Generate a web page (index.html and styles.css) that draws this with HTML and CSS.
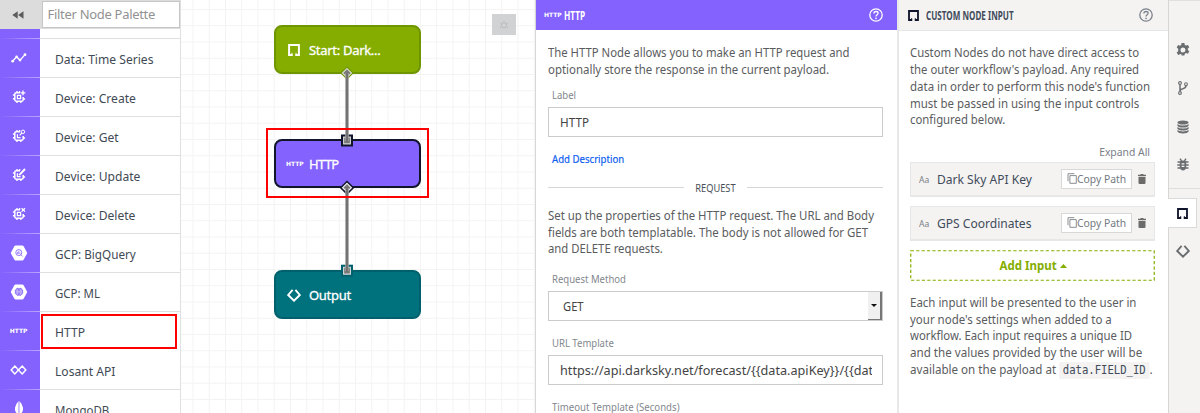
FILE: index.html
```html
<!DOCTYPE html>
<html lang="en">
<head>
<meta charset="utf-8">
<title>Workflow Editor</title>
<link rel="stylesheet" href="styles.css">
</head>
<body>
<svg width="0" height="0" class="defs">
  <symbol id="chip" viewBox="0 0 14 14"><path d="M8 2.8H4.2Q2.8 2.8 2.8 4.2V9.8Q2.8 11.2 4.2 11.2H9.8Q11.2 11.2 11.2 9.8V7" fill="none" stroke="#fff" stroke-width="1.5"/><path d="M5 0.9V2.8M7.6 1V2.8M5 11.2v1.9M8.8 11.2v1.9M.9 5H2.8M.9 8.8H2.8M11.2 9h1.9" stroke="#fff" stroke-width="1.4"/></symbol>
  <symbol id="bracket" viewBox="0 0 12 12"><path d="M4.500 10.9H1.1V1.1H10.9V10.9H7.500" fill="none" stroke="currentColor" stroke-width="2"/><path d="M4 8.800V12M8 8.800V12" stroke="currentColor" stroke-width="1"/></symbol>
  <symbol id="diamond" viewBox="0 0 14 14"><path d="M5.600 1.900L1.2 7L7 12.7L12.8 7L8.400 1.900" fill="none" stroke="currentColor" stroke-width="1.9"/></symbol>
  <symbol id="help" viewBox="0 0 14 14"><circle cx="7" cy="7" r="6.2" fill="none" stroke="currentColor" stroke-width="1.3"/><path d="M4.9 5.5C4.9 4.1 5.8 3.5 7 3.5S9.1 4.2 9.1 5.3C9.1 6.8 7 6.7 7 8.5" fill="none" stroke="currentColor" stroke-width="1.3"/><circle cx="7" cy="10.3" r=".85" fill="currentColor"/></symbol>
  <symbol id="trash" viewBox="0 0 8 10"><path d="M0 .8H2.3L2.8 0H5.2L5.7.8H8V2H0zM.5 2.7H7.5V9Q7.5 10 6.5 10H1.5Q.5 10 .5 9z" fill="#6b6b6b"/></symbol>
  <symbol id="copy" viewBox="0 0 10 11"><path d="M2.9 2.6H9.3V10.3H2.9zM1 8.2V.7H7.3" fill="none" stroke="#7d8186" stroke-width=".9"/></symbol>
  <symbol id="hexagon" viewBox="0 0 18 16"><path d="M5.6.5H12.4Q13.2.5 13.6 1.2L16.9 7.2Q17.3 8 16.9 8.8L13.6 14.8Q13.2 15.5 12.4 15.5H5.6Q4.8 15.5 4.4 14.8L1.1 8.8Q.7 8 1.1 7.2L4.4 1.2Q4.8.5 5.6.5z" fill="#fff"/></symbol>
</svg>
<div class="app">
  <aside class="palette">
    <div class="palette-head">
      <div class="collapse"><svg width="12" height="8" viewBox="0 0 12 8"><path d="M5.7.3V7.7L.3 4zM11.5.3V7.7L6.1 4z" fill="#5c5c5c"/></svg></div>
      <div class="filter"><span>Filter Node Palette</span></div>
    </div>
    <div class="palette-row stub"><div class="ico"></div><div class="name"></div></div>
    <div class="palette-row"><div class="ico"><svg width="16" height="10" viewBox="0 0 16 10"><path d="M1.6 8.2L5.6 3.8L9 7.2L14 1.6" fill="none" stroke="#fff" stroke-width="1.3"/><g fill="#fff"><circle cx="1.7" cy="8.2" r="1.4"/><circle cx="5.6" cy="3.9" r="1.3"/><circle cx="9" cy="7.1" r="1.3"/><circle cx="14" cy="1.7" r="1.4"/></g></svg></div><div class="name"><span class="n1">Data: Time Series</span></div></div>
    <div class="palette-row"><div class="ico"><svg width="14" height="14" viewBox="0 0 14 14"><use href="#chip"/><path d="M5.4 5.4h3.2v3.2H5.4zM11 .6V5.2M8.7 2.9h4.6" fill="none" stroke="#fff" stroke-width="1.3"/></svg></div><div class="name"><span class="n2">Device: Create</span></div></div>
    <div class="palette-row"><div class="ico"><svg width="14" height="14" viewBox="0 0 14 14"><use href="#chip"/><circle cx="11" cy="2.8" r="1.7" fill="none" stroke="#fff"/><path d="M9.8 4L7.6 6.3M5.4 5.2v3.4h3.2" fill="none" stroke="#fff" stroke-width="1.2"/></svg></div><div class="name"><span class="n3">Device: Get</span></div></div>
    <div class="palette-row"><div class="ico"><svg width="14" height="14" viewBox="0 0 14 14"><use href="#chip"/><path d="M7.2 7.2L13 1" stroke="#fff" stroke-width="1.9"/><path d="M5.4 5.2v3.4h3.2" fill="none" stroke="#fff" stroke-width="1.3"/></svg></div><div class="name"><span class="n4">Device: Update</span></div></div>
    <div class="palette-row"><div class="ico"><svg width="14" height="14" viewBox="0 0 14 14"><use href="#chip"/><path d="M5.4 5.4h3.2v3.2H5.4zM9.6 1.2L13 4.6M13 1.2L9.6 4.6" fill="none" stroke="#fff" stroke-width="1.3"/></svg></div><div class="name"><span class="n5">Device: Delete</span></div></div>
    <div class="palette-row"><div class="ico"><svg width="18" height="16" viewBox="0 0 18 16"><use href="#hexagon"/><circle cx="8.8" cy="7.6" r="3" fill="none" stroke="#8766fe" stroke-width=".9"/><path d="M7.6 7v2M8.8 5.8v3.4M10 7.5v1.4M11 9.8l1.7 1.7" stroke="#8766fe" stroke-width=".8"/></svg></div><div class="name"><span class="n6">GCP: BigQuery</span></div></div>
    <div class="palette-row"><div class="ico"><svg width="18" height="16" viewBox="0 0 18 16"><use href="#hexagon"/><path d="M8.6 4.4Q6.8 3.5 6.3 5.3Q4.6 5.8 5.3 7.8Q4.7 10 6.5 10.5Q7.3 12.2 8.6 11.3zM9.4 4.4Q11.2 3.5 11.7 5.3Q13.4 5.8 12.7 7.8Q13.3 10 11.5 10.5Q10.7 12.2 9.4 11.3z" fill="#9b82fe" stroke="#7959ee" stroke-width=".6"/><path d="M6 7.9h6M7.2 5.5v1.4M10.8 5.5v1.4M7.2 9v1.3M10.8 9v1.3" stroke="#fff" stroke-width=".6"/></svg></div><div class="name"><span class="n7">GCP: ML</span></div></div>
    <div class="palette-row"><div class="ico"><b class="http">HTTP</b></div><div class="name hot"><span class="n8">HTTP</span></div></div>
    <div class="palette-row"><div class="ico"><svg width="17" height="10" viewBox="0 0 17 10"><path d="M7.2 3.6L4.8 1.1L1.2 5L4.8 8.9L12.2 1.1L15.8 5L12.2 8.9L9.8 6.4" fill="none" stroke="#fff" stroke-width="1.5"/><path d="M7.2 3.6L9.8 6.4" stroke="#fff" stroke-width="1.5"/></svg></div><div class="name"><span class="n9">Losant API</span></div></div>
    <div class="palette-row"><div class="ico"><svg width="8" height="16" viewBox="0 0 8 16"><path d="M3.6 0Q-.1 4-.1 8Q0 11.5 3.6 14zM4.4 0Q8.1 4 8.1 8Q8 11.5 4.4 14z" fill="#fff"/></svg></div><div class="name"><span class="n10">MongoDB</span></div></div>
  </aside>

  <main class="canvas">
    <div class="bug"><svg width="10" height="10" viewBox="0 0 10 10"><circle cx="5" cy="5.3" r="2.6" fill="none" stroke="#b9bbbd"/><path d="M5 .8v2M1 3l1.6.9M9 3l-1.6.9M1 8l1.6-1M9 8L7.4 7" stroke="#b9bbbd" stroke-width=".8"/></svg></div>
    <div class="node start"><svg width="12" height="12"><use href="#bracket"/></svg><span>Start: Dark...</span></div>
    <div class="node http-node"><b class="http">HTTP</b><span>HTTP</span></div>
    <div class="node output"><svg width="14" height="14"><use href="#diamond"/></svg><span>Output</span></div>
    <svg class="wires" width="354" height="413" viewBox="181 0 354 413">
      <path d="M347 66.3L353.8 73L347 79.7L340.2 73z" fill="#6f9500"/><path d="M347 68.6L351.5 73L347 77.4L342.5 73z" fill="#777" stroke="#dce0cf" stroke-width="1.1"/>
      <path d="M341 134.5h12v12h-12z" fill="#10152b"/><path d="M343.6 137.1h6.8v6.8h-6.8z" fill="#777" stroke="#d8d8d8" stroke-width="1.1"/>
      <path d="M347 180.4L354.4 187.7L347 195L339.6 187.7z" fill="#10152b"/><path d="M347 183.4L351.4 187.7L347 192L342.6 187.7z" fill="#777" stroke="#eee" stroke-width="1.2"/>
      <path d="M341 264.7h12v12h-12z" fill="#00616d"/><path d="M343.6 267.3h6.8v6.8h-6.8z" fill="#777" stroke="#d8dcdc" stroke-width="1.1"/>
      <path d="M347 73V141M347 188V271" stroke="#a0a0a0" stroke-width="3.6"/><path d="M347 73V141M347 188V271" stroke="#737373" stroke-width="2"/>
    </svg>
    <div class="highlight"></div>
  </main>

  <section class="props">
    <header><b class="http">HTTP</b><strong class="title">HTTP</strong><svg width="14" height="14"><use href="#help"/></svg></header>
    <div class="form">
      <p><span class="a1">The HTTP Node allows you to make an HTTP request and</span><span class="a2">optionally store the response in the current payload.</span></p>
      <label class="first"><span class="l1">Label</span></label>
      <div class="field"><span class="f1">HTTP</span></div>
      <div class="add-desc"><span>Add Description</span></div>
      <div class="divider"><span>REQUEST</span></div>
      <p><span class="a3">Set up the properties of the HTTP request. The URL and Body</span><span class="a4">fields are both templatable. The body is not allowed for GET</span><span class="a5">and DELETE requests.</span></p>
      <label class="second"><span class="l2">Request Method</span></label>
      <div class="field select"><span class="f2">GET</span><i><svg width="6" height="3" viewBox="0 0 6 3"><path d="M0 0H6L3 3z" fill="#111"/></svg></i></div>
      <label class="third"><span class="l3">URL Template</span></label>
      <div class="field url"><div class="clip"><span class="f3">https://api.darksky.net/forecast/{{data.apiKey}}/{{data</span></div></div>
      <label class="third"><span class="l4">Timeout Template (Seconds)</span></label>
    </div>
  </section>

  <section class="inputs">
    <header><svg class="mark" width="11" height="11"><use href="#bracket"/></svg><strong class="title">CUSTOM NODE INPUT</strong><svg width="14" height="14" class="q"><use href="#help"/></svg></header>
    <div class="content">
      <p><span class="b1">Custom Nodes do not have direct access to</span><span class="b2">the outer workflow's payload. Any required</span><span class="b3">data in order to perform this node's function</span><span class="b4">must be passed in using the input controls</span><span class="b5">configured below.</span></p>
      <div class="expand"><span>Expand All</span></div>
      <div class="card"><small>Aa</small><span class="c1">Dark Sky API Key</span><div class="copy"><svg width="10" height="11"><use href="#copy"/></svg><span>Copy Path</span></div><svg width="8" height="10"><use href="#trash"/></svg></div>
      <div class="card"><small>Aa</small><span class="c2">GPS Coordinates</span><div class="copy"><svg width="10" height="11"><use href="#copy"/></svg><span>Copy Path</span></div><svg width="8" height="10"><use href="#trash"/></svg></div>
      <div class="add-input"><svg class="dash" width="245" height="31"><rect x=".75" y=".75" width="243.5" height="29.5"/></svg><span>Add Input</span><svg width="7" height="4" viewBox="0 0 7 4"><path d="M0 4L3.5 0L7 4z" fill="#84ad00"/></svg></div>
      <p class="last"><span class="b6">Each input will be presented to the user in</span><span class="b7">your node's settings when added to a</span><span class="b8">workflow. Each input requires a unique ID</span><span class="b9">and the values provided by the user will be</span><span class="b10">available on the payload at <code>data.FIELD_ID</code>.</span></p>
    </div>
  </section>

  <nav class="rail">
    <div class="tab"><svg width="14" height="14" viewBox="0 0 14 14"><path d="M5.6 0h2.8l.4 1.9 1.2.7 1.9-.7 1.4 2.4-1.5 1.3v1.4l1.5 1.3-1.4 2.4-1.9-.7-1.2.7-.4 1.9H5.600l-.4-1.9L4 11.300l-1.900.7L.7 9.600 2.200 8.300V5.700L.7 4.400 2.100 2l1.900.7 1.200-.7zM7 4.500a2.500 2.500 0 100 5 2.500 2.500 0 000-5z" fill="#6b6e70" fill-rule="evenodd"/></svg></div>
    <div class="tab"><svg width="10" height="14" viewBox="0 0 10 14"><g fill="none" stroke="#6b6e70" stroke-width="1.100"><circle cx="2" cy="2" r="1.400"/><circle cx="2" cy="12" r="1.400"/><circle cx="8" cy="3.200" r="1.400"/><path stroke-width="1.500" d="M2 3.400v7.200M8 4.600Q8 7.200 5 7.700Q2.200 8.200 2.100 10"/></g></svg></div>
    <div class="tab"><svg width="12" height="14" viewBox="0 0 12 14"><g fill="#6b6e70"><ellipse cx="6" cy="2.500" rx="5.600" ry="2.100"/><path d="M.4 4Q2 5.500 6 5.500T11.600 4V5.700Q10.500 7.600 6 7.600T.4 5.700zM.4 7.100Q2 8.600 6 8.600T11.600 7.100V8.700Q10.500 10.500 6 10.500T.4 8.700zM.4 10.100Q2 11.500 6 11.500T11.600 10.100V11.600Q10.500 13.500 6 13.500T.4 11.600z"/></g></svg></div>
    <div class="tab"><svg width="12" height="13" viewBox="0 0 12 13"><path d="M2.800 3.500Q6 1.300 9.200 3.500V9.500Q8.400 12.500 6 12.500T2.800 9.500z" fill="#6b6e70"/><path d="M.5 4H11.500M.3 7H11.700M.5 10H11.500M3 .7L4.600 3M9 .7L7.400 3" stroke="#6b6e70" stroke-width="1.400"/><path d="M4.600 5.800h2.800M4.600 8.400h2.800" stroke="#f4f3f2" stroke-width="1.200"/></svg></div>
    <div class="tab active"><svg width="11" height="11"><use href="#bracket"/></svg></div>
    <div class="tab out"><svg width="14" height="14"><use href="#diamond"/></svg></div>
  </nav>
</div>
</body>
</html>
```

FILE: styles.css
```css
* { box-sizing: border-box; }
body { margin: 0; background: #fff; font-family: "Noto Sans", "Open Sans", sans-serif; font-size: 12.6px; color: #5a5c5e; }
.defs { position: absolute; }
.app { display: grid; grid-template-columns: 181px 354px 362px 271px 32px; height: 413px; overflow: hidden; }
svg { flex: none; display: block; }
span, strong, b { white-space: nowrap; }
p { margin: 0; line-height: 16.8px; }
p > span { display: block; width: max-content; }
.http { font: 700 6px/8px "DejaVu Sans", sans-serif; color: #fff; }

/* Condensed text widths */
p > span, .name span, .field span, label span, .add-desc span, .divider span, .expand span, .card span, .add-input span, .title { transform: scaleX(var(--w, .9)); transform-origin: left; }
.a1 { --w: .899; }
.a2, .a4 { --w: .908; }
.a3 { --w: .905; }
.b3, .b4, .b6, .b7 { --w: .911; }
.b9, .b10 { --w: .921; }
.name { --w: .96; }
.n6 { --w: .93; }
.n7, .n10 { --w: .91; }
.l4 { --w: .907; }
.f2 { --w: .86; }
.f3 { --w: .973; }
.expand, .card { --w: .942; }
.add-input { --w: .92; }

/* Palette */
.palette { border-right: 1px solid #e0e0e0; overflow: hidden; }
.palette-head { display: flex; height: 29px; padding: 1px 0; background: #dcdcdc; }
.collapse { width: 41.500px; display: flex; align-items: center; padding-left: 12px; }
.filter { flex: 1; background: #fff; border: 1px solid #c6c6c6; display: flex; align-items: center; padding: 0 0 1px 5px; font-size: 13px; color: #929292; letter-spacing: -.3px; }
.palette-row { display: flex; height: 39px; }
.palette-row.stub { height: 9.500px; }
.ico { width: 40px; background: linear-gradient(90deg, #8462fe, #b9a6fb) bottom / 100% 1px no-repeat #8462fe; display: flex; align-items: center; justify-content: center; padding-right: 3px; }
.name { flex: 1; border-bottom: 1px solid #dfdfdf; padding: 4px 0 0 14.500px; display: flex; align-items: center; font-size: 12.600px; color: #414a54; }
.palette-row .hot { border: 2px solid #f00; margin: 2px 3px 2px 1px; padding: 2px 0 0 11.500px; }

/* Canvas */
.canvas { position: relative; background-image: linear-gradient(90deg, #f3f3f3 1px, transparent 1px), linear-gradient(#f3f3f3 1px, transparent 1px); background-size: 16.250px 16.250px; background-position: 11.500px 9px; }
.bug { position: absolute; left: 311px; top: 14px; width: 24px; height: 21px; background: #d0d2d4; display: flex; align-items: center; justify-content: center; }
.node { position: absolute; left: 93px; width: 147px; height: 49px; border-radius: 8px; border: 2px solid; display: flex; align-items: center; color: #fff; font-size: 13px; letter-spacing: -.3px; -webkit-text-stroke: .3px #fff; }
.node svg { margin-left: 12px; }
.node span { position: absolute; left: 33px; }
.start { top: 25px; background: #84ad00; border-color: #6f9500; }
.start svg { color: #fff; }
.http-node { top: 139px; background: #8462fe; border-color: #10152b; }
.http-node .http { margin-left: 10px; -webkit-text-stroke: 0; letter-spacing: 0; }
.http-node span { letter-spacing: -.7px; }
.output { top: 270px; background: #00727e; border-color: #00616d; }
.output svg { margin-left: 11px; }
.wires { position: absolute; left: 0; top: 0; }
.highlight { position: absolute; left: 85px; top: 128px; width: 163px; height: 70px; border: 2px solid #f00; }

/* Node properties */
.props { border-left: 1px solid #d7d7d7; overflow: hidden; }
header { height: 30px; display: flex; align-items: center; }
.title { font: 700 12px "Noto Sans", sans-serif; --w: .675; }
.props header { background: #8462fe; color: #fff; padding: 0 14.500px 0 8px; }
.props .title { margin-left: 2.500px; --w: .69; }
header svg:last-child { margin-left: auto; }
.form { padding: 15.300px 14px 0 12px; display: flex; flex-direction: column; }
label { display: flex; align-items: center; padding-left: 3.500px; font-size: 10.600px; color: #82878d; }
label.first { height: 28px; padding-top: 5px; }
label.second { height: 33px; padding-top: 8px; }
label.third { height: 34px; padding-top: 9px; }
.field { height: 30px; border: 1px solid #cbcbcb; display: flex; align-items: center; padding-left: 11px; font-size: 13px; color: #444; }
.add-desc { height: 43px; padding: 1px 0 0 3.500px; display: flex; align-items: center; color: #0f5ff0; font-size: 10.700px; -webkit-text-stroke: .2px #0f5ff0; }
.divider { height: 28px; display: flex; align-items: center; justify-content: center; gap: 9px; font-size: 10.300px; color: #4a5059; padding-bottom: 12px; }
.divider span { transform-origin: center; }
.divider::before, .divider::after { content: ""; flex: 1; height: 1px; background: #d6d6d6; }
.select { padding: 0 0 0 14px; }
.select i { margin-left: auto; width: 14px; height: 28px; background: #f0f0f0; border-right: 2px solid #777; border-bottom: 1px solid #777; display: flex; align-items: center; justify-content: center; }
.clip { width: 312px; overflow: hidden; }
.clip span { display: block; width: max-content; }

/* Custom node input */
.inputs { border-left: 2px solid #e8e8e8; }
.inputs header { height: 31px; background: #f4f3f2; border-bottom: 1px solid #e6e6e6; padding: 0 15px 0 9px; color: #414b5a; }
.inputs .mark { color: #10152b; }
.inputs .title { margin-left: 7px; }
.q { color: #7b828b; }
.content { padding: 14.300px 13.500px 0 11px; }
.expand { height: 33px; display: flex; align-items: center; justify-content: flex-end; padding: 12px 5px 0 0; font-size: 11px; color: #7b8087; }
.expand span { transform-origin: right; }
.card { height: 35px; margin-bottom: 9px; background: #f4f3f2; border: 1px solid #e7e7e7; border-bottom-width: 2px; display: flex; align-items: center; padding: 0 8px; }
.card small { font-size: 8.500px; color: #7b8087; width: 17.500px; }
.card > span { flex: 1; font-size: 12.800px; color: #414b5a; }
.copy { width: 71px; height: 20px; background: #fff; border: 1px solid #d8d8d8; display: flex; align-items: center; padding: 0 0 1px 5.500px; margin-right: 6px; font-size: 11px; color: #747a82; }
.add-input { position: relative; height: 31px; display: flex; align-items: center; justify-content: center; gap: 4px; color: #84ad00; font-weight: 700; font-size: 12.500px; }
.add-input span { transform-origin: center; }
.add-input span + svg { margin-left: -3px; }
.dash { position: absolute; left: 0; top: 0; }
.dash rect { fill: none; stroke: #84ad00; stroke-width: 1.200; stroke-dasharray: 3.200 2.200; }
.last { padding-top: 13.500px; }
code { font: 11.500px/16px "DejaVu Sans Mono", monospace; color: #414b5a; background: #f4f3f2; padding: 1px 4px 2px; }

/* Right rail */
.rail { background: #f4f3f2; border-left: 1px solid #d6d6d6; padding-top: 31px; box-shadow: inset 0 1px #e0e0e0; }
.tab { height: 38.300px; display: flex; align-items: center; justify-content: center; padding-right: 4px; }
.tab:nth-child(4) { border-bottom: 1px solid #dedede; height: 43px; margin-bottom: 9.500px; padding-bottom: 4px; }
.active { height: 30px; background: #fff; margin: 0 3px 0 -1px; border: 1px solid #dadada; border-left: 0; padding: 0; color: #10152b; }
.out { height: 46px; color: #6b6e70; }
```
